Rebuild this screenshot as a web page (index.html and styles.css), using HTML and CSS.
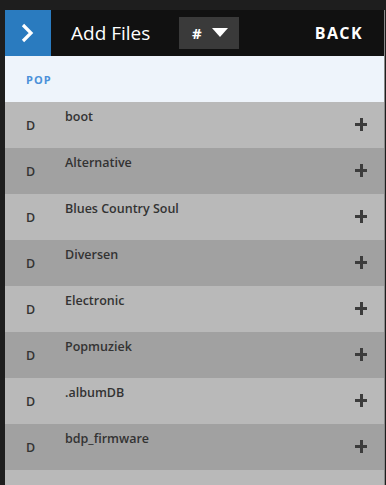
FILE: index.html
```html
<!DOCTYPE HTML>
<html lang="en">
  <head>
    <title>Add Files</title>
    <meta charset="utf-8">
    <link rel="stylesheet" href="styles.css">
  </head>
  <body>
  <div id="panel">
    <div id="header">
      <a class="toggle" href="#">
        <svg width="16" height="20" viewBox="0 0 16 20"><path d="M3 2 L11 10 L3 18" fill="none" stroke="#fff" stroke-width="3.2"/></svg>
      </a>
      <span class="title">Add Files</span>
      <span class="select">#
        <svg width="16" height="10" viewBox="0 0 16 10"><path d="M0 0 H16 L8 9 Z" fill="#fff"/></svg>
      </span>
      <a class="back" href="#">BACK</a>
    </div>

    <div id="crumb">POP</div>

    <ul id="files">
      <li><span class="type">D</span><span class="name">boot</span><span class="add"></span></li>
      <li><span class="type">D</span><span class="name">Alternative</span><span class="add"></span></li>
      <li><span class="type">D</span><span class="name">Blues Country Soul</span><span class="add"></span></li>
      <li><span class="type">D</span><span class="name">Diversen</span><span class="add"></span></li>
      <li><span class="type">D</span><span class="name">Electronic</span><span class="add"></span></li>
      <li><span class="type">D</span><span class="name">Popmuziek</span><span class="add"></span></li>
      <li><span class="type">D</span><span class="name">.albumDB</span><span class="add"></span></li>
      <li><span class="type">D</span><span class="name">bdp_firmware</span><span class="add"></span></li>
      <li class="blank"></li>
    </ul>
  </div>
  </body>
</html>
```

FILE: styles.css
```css
html {
  height: 100%;
}
body {
  margin: 0;
  padding: 10px 0 0 5px;
  background: #1e1e1e;
  font-family: "Open Sans", sans-serif;
  height: 100%;
  box-sizing: border-box;
  overflow: hidden;
}

#panel {
  width: 379px;
  border-right: 1px solid #8a8a8a;
  height: 100%;
  background: #b9b9b9;
}

#header {
  display: flex;
  align-items: center;
  height: 46px;
  background: #111111;
  color: #fff;
}

.toggle {
  width: 46px;
  height: 46px;
  background: #2a7bbf;
  display: flex;
  align-items: center;
  justify-content: center;
}

.title {
  font-size: 19px;
  margin-left: 20px;
}

.select {
  margin-left: 29px;
  width: 60px;
  height: 32px;
  background: #3a3a3a;
  display: flex;
  align-items: center;
  justify-content: center;
  gap: 10px;
  font-size: 15px;
  font-weight: 700;
  padding-left: 1px;
  box-sizing: border-box;
}

.back {
  margin-left: auto;
  margin-right: 21px;
  color: #fff;
  text-decoration: none;
  font-size: 16px;
  font-weight: 700;
  letter-spacing: 1.4px;
}

#crumb {
  height: 46px;
  background: #eef4fb;
  color: #4a90d9;
  font-size: 11px;
  font-weight: 700;
  letter-spacing: 1px;
  display: flex;
  align-items: center;
  padding-left: 21px;
}

#files {
  list-style: none;
  margin: 0;
  padding: 0;
}

#files li {
  display: flex;
  height: 46px;
  background: #b9b9b9;
  color: #333;
  font-size: 12.5px;
  font-weight: 600;
}

#files li:nth-child(even) {
  background: #a1a1a1;
}

.type {
  width: 60px;
  padding-left: 21px;
  box-sizing: border-box;
  align-self: center;
  margin-top: 1px;
}

.name {
  flex: 1;
  padding-top: 6px;
}

.add {
  position: relative;
  width: 12px;
  height: 12px;
  align-self: center;
  margin-right: 17px;
  margin-top: -2px;
}

.add::before,
.add::after {
  content: "";
  position: absolute;
  background: #3c3c3c;
}

.add::before {
  left: 0;
  top: 5px;
  width: 12px;
  height: 3px;
}

.add::after {
  left: 5px;
  top: 0;
  width: 3px;
  height: 13px;
}
```
